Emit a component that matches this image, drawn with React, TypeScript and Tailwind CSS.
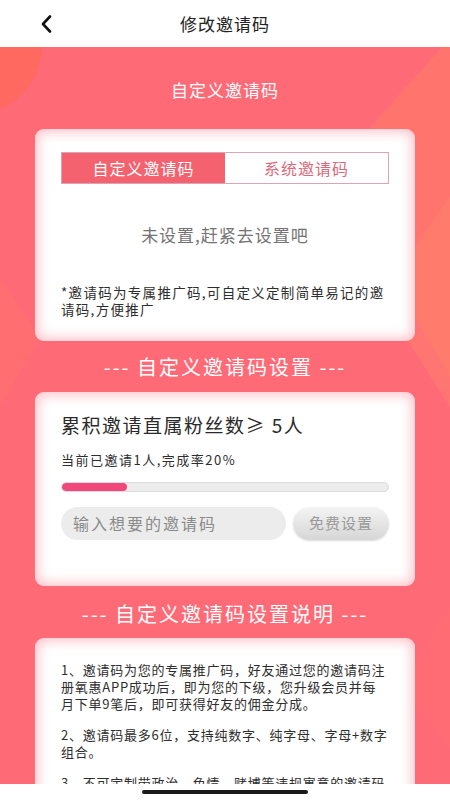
import React from "react";

function BackIcon() {
  return (
    <svg width="11" height="18" viewBox="0 0 11 18" fill="none">
      <polyline points="9,1.5 2,9 9,16.5" stroke="#111" strokeWidth="2.6" strokeLinecap="round" strokeLinejoin="round" />
    </svg>
  );
}

function Card({ className = "", children }: { className?: string; children: React.ReactNode }) {
  return (
    <div className={"mx-[35px] rounded-[9px] bg-white shadow-[inset_0_0_12px_3px_rgba(255,118,132,0.45)] " + className}>
      {children}
    </div>
  );
}

export default function App() {
  return (
    <div className="flex h-[800px] w-[450px] flex-col overflow-hidden bg-white font-['Noto_Sans_CJK_SC','Noto_Sans',sans-serif]">
      {/* header */}
      <div className="grid h-[47px] shrink-0 grid-cols-[1fr_auto_1fr] items-center bg-white">
        <div className="flex items-center pl-[41px] pt-[1px]">
          <BackIcon />
        </div>
        <div className="text-[17px] leading-[24px] tracking-[1px] text-[#222]">修改邀请码</div>
        <div />
      </div>

      {/* main */}
      <div className="relative flex-1 overflow-hidden bg-[#ff6a77]">
        <svg className="absolute inset-0" width="450" height="737" viewBox="0 0 450 737">
          <circle cx="-28" cy="-2" r="70" fill="#ff6a55" opacity="0.7" />
          <polygon points="450,0 442,0 330,125 450,330" fill="#ff7c68" opacity="0.6" />
          <polygon points="450,150 380,250 450,360" fill="#ff866c" opacity="0.4" />
          <polygon points="0,230 40,290 0,360" fill="#ff7a68" opacity="0.3" />
          <polygon points="450,560 400,640 450,700" fill="#ff7468" opacity="0.25" />
        </svg>

        <div className="relative flex flex-col">
          <div className="pt-[31px] text-center text-[17px] leading-[24px] tracking-[1px] text-white">自定义邀请码</div>

          {/* card 1 */}
          <Card className="mt-[27px] px-[26px] pb-[24px] pt-[23px]">
            <div className="grid h-[32px] grid-cols-2 border border-[#d9a4b6]">
              <div className="flex items-center justify-center bg-[#f5626f] text-[16px] tracking-[1px] text-white">自定义邀请码</div>
              <div className="flex items-center justify-center bg-white text-[16px] tracking-[1px] text-[#d96a7d]">系统邀请码</div>
            </div>
            <div className="mt-[39px] text-center text-[17px] leading-[24px] tracking-[1px] text-[#747474]">未设置,赶紧去设置吧</div>
            <div className="mt-[37px] text-[13.5px] leading-[16.5px] tracking-[1.3px] text-[#2e2e2e]">
              <div className="whitespace-nowrap">*邀请码为专属推广码,可自定义定制简单易记的邀</div>
              <div className="whitespace-nowrap">请码,方便推广</div>
            </div>
          </Card>

          <div className="mt-[12px] text-center text-[20px] leading-[28px] tracking-[2px] text-white">--- 自定义邀请码设置 ---</div>

          {/* card 2 */}
          <Card className="mt-[11px] px-[26px] pb-[46px] pt-[20px]">
            <div className="whitespace-nowrap text-[19px] leading-[26px] tracking-[1.5px] text-[#2a2a2a]">累积邀请直属粉丝数≥ 5人</div>
            <div className="mt-[13px] whitespace-nowrap text-[13px] leading-[18px] tracking-[1.5px] text-[#2e2e2e]">当前已邀请1人,完成率20%</div>
            <div className="mt-[13px] h-[9.5px] overflow-hidden rounded-full border border-[#dcdcdc] bg-[#ececec]">
              <div className="h-full rounded-full bg-[#f2477b]" style={{ width: "20%" }} />
            </div>
            <div className="mt-[15px] flex items-center gap-[7px]">
              <div className="flex h-[33px] w-[228px] items-center rounded-full bg-[#ececec] pl-[12px] text-[16px] tracking-[2px] text-[#8a8a8a]">输入想要的邀请码</div>
              <div className="flex h-[33px] w-[97px] items-center justify-center rounded-full bg-gradient-to-b from-[#f4f4f4] to-[#d6d6d6] text-[15px] tracking-[1px] text-[#9a9a9a] shadow-[0_1px_2px_rgba(0,0,0,0.15)]">免费设置</div>
            </div>
          </Card>

          <div className="mt-[14px] text-center text-[20px] leading-[28px] tracking-[2px] text-white">--- 自定义邀请码设置说明 ---</div>

          {/* card 3 */}
          <Card className="mt-[10px] px-[26px] pb-[30px] pt-[23px]">
            <div className="text-[13px] leading-[17px] tracking-[0.75px] text-[#2e2e2e]">
              <div className="whitespace-nowrap">1、邀请码为您的专属推广码，好友通过您的邀请码注</div>
              <div className="whitespace-nowrap">册氧惠APP成功后，即为您的下级，您升级会员并每</div>
              <div className="whitespace-nowrap">月下单9笔后，即可获得好友的佣金分成。</div>
              <div className="mt-[14px] whitespace-nowrap">2、邀请码最多6位，支持纯数字、纯字母、字母+数字</div>
              <div className="whitespace-nowrap">组合。</div>
              <div className="mt-[14px] whitespace-nowrap">3、不可定制带政治、色情、赌博等违规寓意的邀请码</div>
            </div>
          </Card>
        </div>
      </div>

      {/* home indicator */}
      <div className="flex h-[16px] shrink-0 items-center justify-center bg-white">
        <div className="h-[3.5px] w-[166px] rounded-full bg-[#1a1a1a]" />
      </div>
    </div>
  );
}
